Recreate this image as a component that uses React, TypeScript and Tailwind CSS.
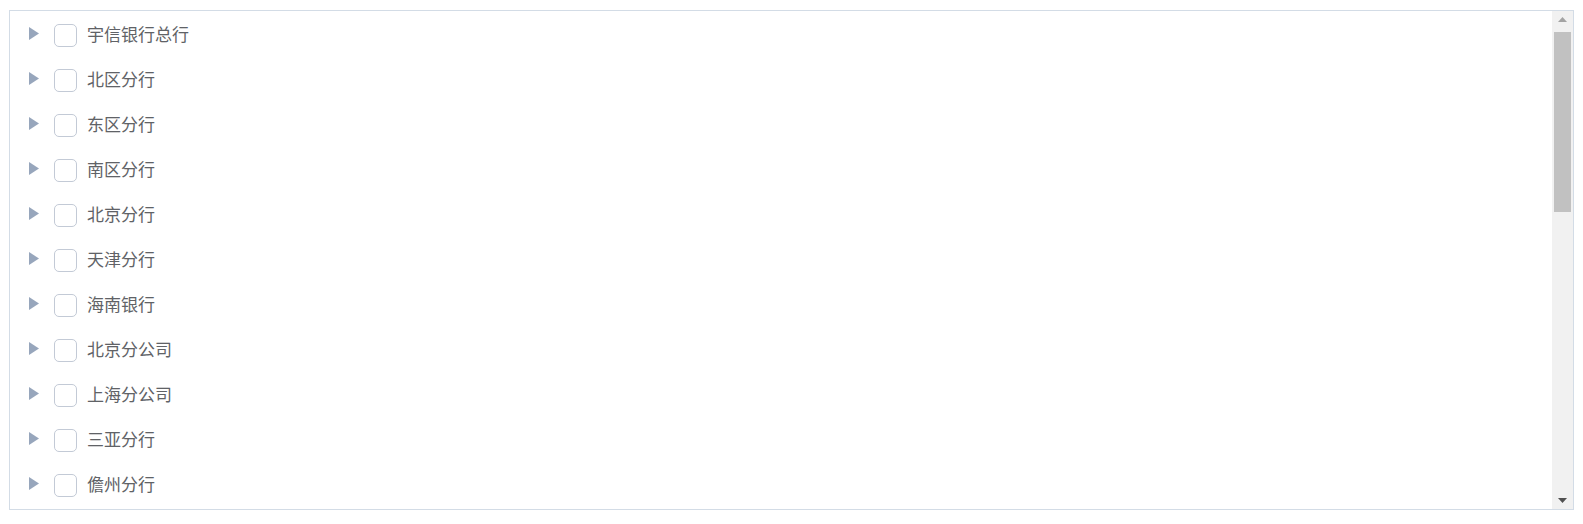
import React from 'react';

const branches = [
  '宇信银行总行',
  '北区分行',
  '东区分行',
  '南区分行',
  '北京分行',
  '天津分行',
  '海南银行',
  '北京分公司',
  '上海分公司',
  '三亚分行',
  '儋州分行',
];

const Caret: React.FC = () => (
  <svg width="10" height="13" viewBox="0 0 10 13" className="shrink-0">
    <path d="M0 0 L10 6.5 L0 13 Z" fill="#97a6bc" />
  </svg>
);

const App: React.FC = () => {
  return (
    <div
      className="pl-[9px] pr-[9px] pt-[10px] bg-white"
      style={{ fontFamily: '"Noto Sans CJK SC", "Noto Sans", sans-serif' }}
    >
      <div className="flex h-[500px] border border-[#d3dce6] bg-white">
        <ul className="flex-1 overflow-hidden">
          {branches.map(name => (
            <li key={name} className="flex h-[45px] items-center pl-[19px]">
              <Caret />
              <span className="ml-[15px] mt-[3px] h-[23px] w-[23px] shrink-0 rounded-[5px] border border-[#c3cad6] bg-white" />
              <span className="ml-[10px] text-[17px] leading-none text-[#606266]">{name}</span>
            </li>
          ))}
        </ul>
        <div className="flex w-[21px] flex-col bg-[#f1f1f1]">
          <div className="flex h-[17px] items-center justify-center">
            <svg width="9" height="5" viewBox="0 0 9 5">
              <path d="M0 5 L4.5 0 L9 5 Z" fill="#a3a3a3" />
            </svg>
          </div>
          <div className="flex-1 px-[2px] pt-[4px]">
            <div className="h-[180px] w-full bg-[#c1c1c1]" />
          </div>
          <div className="flex h-[17px] items-center justify-center">
            <svg width="9" height="5" viewBox="0 0 9 5">
              <path d="M0 0 L9 0 L4.5 5 Z" fill="#505050" />
            </svg>
          </div>
        </div>
      </div>
    </div>
  );
};

export default App;
